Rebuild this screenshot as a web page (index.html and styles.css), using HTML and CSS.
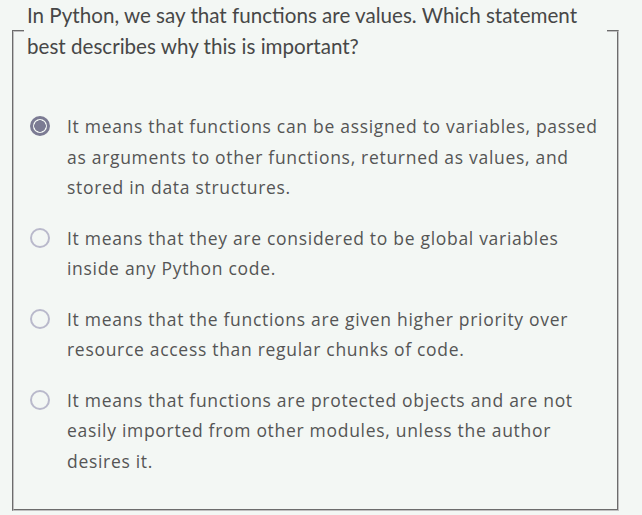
FILE: index.html
```html
<!DOCTYPE html>
<html lang="en">
<head>
<meta charset="utf-8">
<title>Quiz</title>
<link rel="stylesheet" href="styles.css">
</head>
<body>
<fieldset class="question">
  <legend class="prompt">In Python, we say that functions are values. Which statement best describes why this is important?</legend>
  <div class="options">
    <label class="option">
      <input type="radio" name="q" class="radio" checked>
      <span class="text">It means that functions can be assigned to variables, passed as arguments to other functions, returned as values, and stored in data structures.</span>
    </label>
    <label class="option">
      <input type="radio" name="q" class="radio">
      <span class="text">It means that they are considered to be global variables inside any Python code.</span>
    </label>
    <label class="option">
      <input type="radio" name="q" class="radio">
      <span class="text">It means that the functions are given higher priority over resource access than regular chunks of code.</span>
    </label>
    <label class="option">
      <input type="radio" name="q" class="radio">
      <span class="text">It means that functions are protected objects and are not easily imported from other modules, unless the author desires it.</span>
    </label>
  </div>
</fieldset>
</body>
</html>
```

FILE: styles.css
```css
html, body {
  margin: 0;
  padding: 0;
  background: #f3f7f4;
}

body {
  font-family: "Open Sans", Lato, sans-serif;
  color: #555;
}

.question {
  margin: 0 23px 0 12px;
  padding: 0 10px 33px 10px;
  border: 2px groove #c0c0c0;
}

.prompt {
  padding: 0 3px;
  font-family: Lato, sans-serif;
  font-size: 20.6px;
  line-height: 31px;
  color: #474747;
}

.options {
  display: flex;
  flex-direction: column;
  gap: 20px;
  padding-top: 49px;
}

.option {
  display: flex;
  align-items: flex-start;
  gap: 17px;
  font-size: 17.5px;
  letter-spacing: 0.7px;
  line-height: 30.5px;
}

.radio {
  appearance: none;
  -webkit-appearance: none;
  flex: none;
  width: 20px;
  height: 20px;
  margin: 5px 0 0 6px;
  border: 2px solid #b9b9cb;
  border-radius: 50%;
  box-sizing: border-box;
  background: transparent;
}

.radio:checked {
  border: 3px solid #7b7b93;
  background: radial-gradient(circle, #7b7b93 0 5.5px, transparent 6px);
}

.text {
  flex: 1;
}
```
